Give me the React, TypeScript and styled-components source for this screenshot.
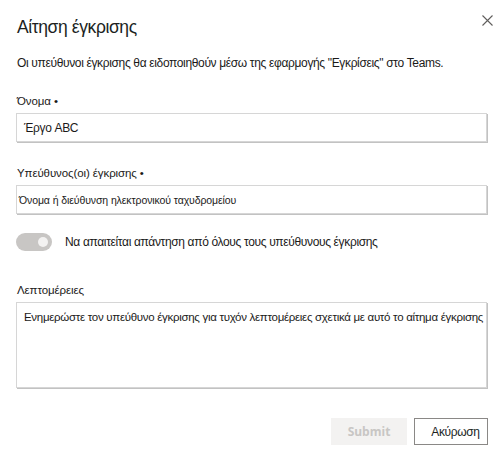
import React from "react";
import styled, { createGlobalStyle } from "styled-components";

const Global = createGlobalStyle`
  html, body { margin: 0; padding: 0; background: #fff; }
  body { font-family: "Liberation Sans", Arial, sans-serif; color: #1b1a19; }
  * { box-sizing: border-box; }
`;

const Dialog = styled.div`
  width: 500px;
  height: 455px;
  padding: 0 13px 0 16px;
  display: flex;
  flex-direction: column;
  background: #fff;
`;

const Header = styled.div`
  display: flex;
  align-items: center;
  justify-content: space-between;
  height: 26px;
  margin-top: 14px;
`;

const Title = styled.h1`
  margin: 0 0 0 1px;
  font-size: 17.5px;
  font-weight: 400;
  letter-spacing: -0.4px;
  line-height: 26px;
  color: #201f1e;
`;

const Close = styled.button`
  border: none;
  background: none;
  padding: 0;
  width: 12px;
  height: 12px;
  display: flex;
  align-items: center;
  justify-content: center;
  margin-right: -6px;
  margin-top: -14px;
  cursor: pointer;
`;

const Description = styled.p`
  margin: 15px 0 0 1px;
  font-size: 12px;
  letter-spacing: -0.35px;
  line-height: 16px;
  white-space: nowrap;
  color: #1b1a19;
`;

const Field = styled.div<{ $gap: number }>`
  display: flex;
  flex-direction: column;
  margin-top: ${(p) => p.$gap}px;
`;

const Label = styled.label`
  font-size: 11.5px;
  letter-spacing: -0.1px;
  line-height: 16px;
  margin-left: 1px;
  margin-bottom: 4px;
  color: #1b1a19;
`;

const Box = styled.div<{ $height: number; $small?: boolean; $top?: boolean }>`
  height: ${(p) => p.$height}px;
  border: 1px solid #d6d6d6;
  box-shadow: 1px 1px 0 #c2c2c2;
  display: flex;
  align-items: ${(p) => (p.$top ? "flex-start" : "center")};
  padding: ${(p) => (p.$top ? "8px 7px" : p.$small ? "0 2px" : "0 7px")};
  font-size: ${(p) => (p.$small ? "10.5px" : p.$top ? "11.5px" : "12px")};
  letter-spacing: ${(p) => (p.$small ? "-0.1px" : p.$top ? "-0.3px" : "-0.35px")};
  white-space: nowrap;
  color: #1b1a19;
`;

const ToggleRow = styled.div`
  display: flex;
  align-items: center;
  gap: 13px;
  margin-top: 19px;
`;

const Track = styled.div`
  width: 36px;
  height: 18px;
  border-radius: 9px;
  background: #c8c6c4;
  position: relative;
  flex: none;
`;

const Knob = styled.span`
  position: absolute;
  right: 4px;
  top: 4px;
  width: 10px;
  height: 10px;
  border-radius: 50%;
  background: #f3f2f1;
`;

const ToggleText = styled.span`
  font-size: 12px;
  letter-spacing: -0.35px;
  color: #1b1a19;
`;

const Footer = styled.div`
  display: flex;
  justify-content: flex-end;
  gap: 7px;
  margin-top: 30px;
`;

const Button = styled.button<{ $primary?: boolean }>`
  height: 27px;
  padding: 0;
  font-family: inherit;
  ${(p) =>
    p.$primary
      ? `width: 76px; background: #f3f2f1; border: none; color: #c8c6c4; font-weight: 700; font-family: "Open Sans", sans-serif; font-size: 12px;`
      : `width: 74px; margin-right: -1px; padding-left: 9px; background: #fff; border: 1px solid #8a8886; color: #201f1e; font-size: 12px; letter-spacing: -0.35px;`}
`;

export default function App() {
  return (
    <>
      <Global />
      <Dialog>
        <Header>
          <Title>Αίτηση έγκρισης</Title>
          <Close aria-label="Κλείσιμο">
            <svg width="11" height="11" viewBox="0 0 11 11">
              <path d="M0.5 0.5 L10.5 10.5 M10.5 0.5 L0.5 10.5" stroke="#605e5c" strokeWidth="1.1" />
            </svg>
          </Close>
        </Header>
        <Description>
          Οι υπεύθυνοι έγκρισης θα ειδοποιηθούν μέσω της εφαρμογής "Εγκρίσεις" στο Teams.
        </Description>
        <Field $gap={22}>
          <Label>Όνομα •</Label>
          <Box $height={29}>Έργο ABC</Box>
        </Field>
        <Field $gap={23}>
          <Label>Υπεύθυνος(οι) έγκρισης •</Label>
          <Box $height={29} $small>
            Όνομα ή διεύθυνση ηλεκτρονικού ταχυδρομείου
          </Box>
        </Field>
        <ToggleRow>
          <Track>
            <Knob />
          </Track>
          <ToggleText>Να απαιτείται απάντηση από όλους τους υπεύθυνους έγκρισης</ToggleText>
        </ToggleRow>
        <Field $gap={31}>
          <Label>Λεπτομέρειες</Label>
          <Box $height={86} $top>
            Ενημερώστε τον υπεύθυνο έγκρισης για τυχόν λεπτομέρειες σχετικά με αυτό το αίτημα έγκρισης
          </Box>
        </Field>
        <Footer>
          <Button $primary disabled>
            Submit
          </Button>
          <Button>Ακύρωση</Button>
        </Footer>
      </Dialog>
    </>
  );
}
